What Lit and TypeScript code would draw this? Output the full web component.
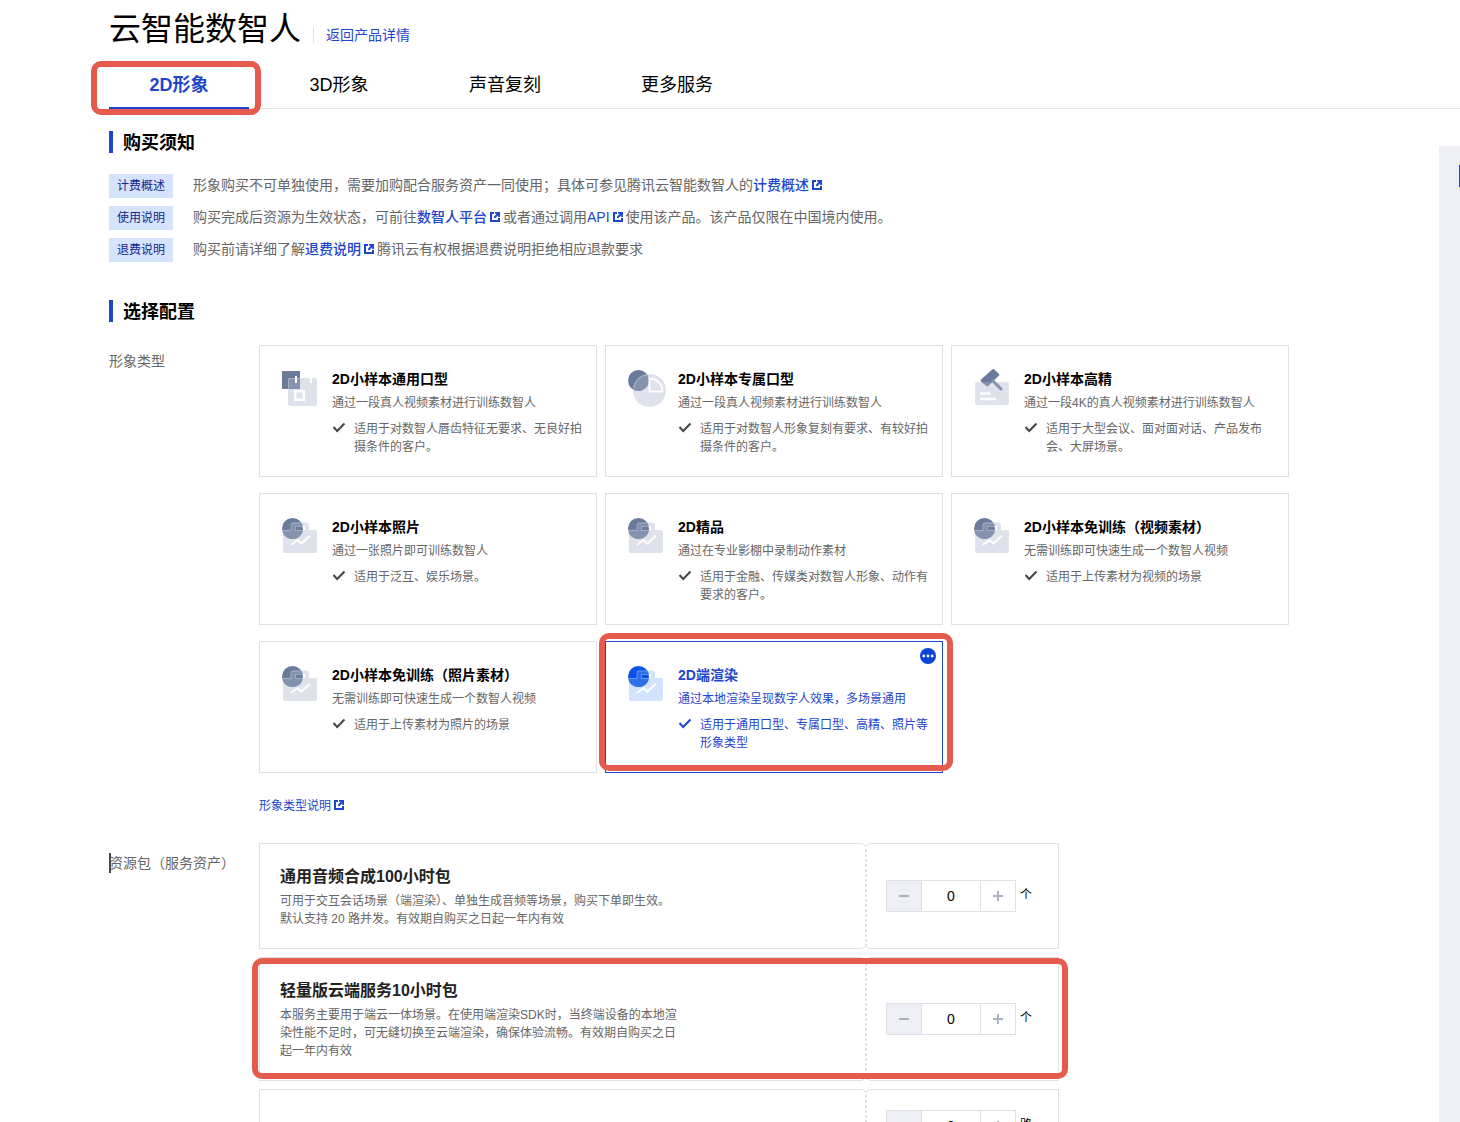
import { LitElement, html, css, svg, nothing } from "lit";
import { customElement, state } from "lit/decorators.js";
import { classMap } from "lit/directives/class-map.js";

type IconName = "blocks" | "pie" | "gavel" | "chart";

interface Tone {
  dark: string;
  light: string;
  blend: string;
  edge: string;
}

interface ImageType {
  id: string;
  icon: IconName;
  title: string;
  desc: string;
  usage: string;
}

interface ResourcePack {
  id: string;
  title: string;
  lines: string[];
  unit: string;
  marked?: boolean;
}

const GREY: Tone = { dark: "#6a7a9a", light: "#dfe2ea", blend: "#8592ad", edge: "#c9cfdb" };
const BLUE: Tone = { dark: "#0b53e8", light: "#d2e3ff", blend: "#2f6fe8", edge: "#a9c8fb" };

const TABS = ["2D形象", "3D形象", "声音复刻", "更多服务"];

const TYPES: ImageType[] = [
  { id: "general", icon: "blocks", title: "2D小样本通用口型", desc: "通过一段真人视频素材进行训练数智人", usage: "适用于对数智人唇齿特征无要求、无良好拍摄条件的客户。" },
  { id: "exclusive", icon: "pie", title: "2D小样本专属口型", desc: "通过一段真人视频素材进行训练数智人", usage: "适用于对数智人形象复刻有要求、有较好拍摄条件的客户。" },
  { id: "hd", icon: "gavel", title: "2D小样本高精", desc: "通过一段4K的真人视频素材进行训练数智人", usage: "适用于大型会议、面对面对话、产品发布会、大屏场景。" },
  { id: "photo", icon: "chart", title: "2D小样本照片", desc: "通过一张照片即可训练数智人", usage: "适用于泛互、娱乐场景。" },
  { id: "premium", icon: "chart", title: "2D精品", desc: "通过在专业影棚中录制动作素材", usage: "适用于金融、传媒类对数智人形象、动作有要求的客户。" },
  { id: "video-free", icon: "chart", title: "2D小样本免训练（视频素材）", desc: "无需训练即可快速生成一个数智人视频", usage: "适用于上传素材为视频的场景" },
  { id: "photo-free", icon: "chart", title: "2D小样本免训练（照片素材）", desc: "无需训练即可快速生成一个数智人视频", usage: "适用于上传素材为照片的场景" },
  { id: "client", icon: "chart", title: "2D端渲染", desc: "通过本地渲染呈现数字人效果，多场景通用", usage: "适用于通用口型、专属口型、高精、照片等形象类型" },
];

const PACKS: ResourcePack[] = [
  {
    id: "audio",
    title: "通用音频合成100小时包",
    lines: ["可用于交互会话场景（端渲染）、单独生成音频等场景，购买下单即生效。", "默认支持 20 路并发。有效期自购买之日起一年内有效"],
    unit: "个",
  },
  {
    id: "cloud",
    title: "轻量版云端服务10小时包",
    lines: ["本服务主要用于端云一体场景。在使用端渲染SDK时，当终端设备的本地渲染性能不足时，可无缝切换至云端渲染，确保体验流畅。有效期自购买之日起一年内有效"],
    unit: "个",
    marked: true,
  },
  { id: "channel", title: "", lines: [], unit: "路" },
];

const external = html`<svg class="ext" viewBox="0 0 10 10" aria-hidden="true">
  <path d="M4 1H1V9H9V6" fill="none" stroke="currentColor" stroke-width="2" />
  <path d="M5 0H10V5H8.200V3.200L5 6.400L3.600 5L6.800 1.800H5Z" fill="currentColor" />
</svg>`;

function drawIcon(name: IconName, t: Tone) {
  switch (name) {
    case "blocks":
      return svg`
        <rect x="2" y="4" width="18" height="18" fill=${t.dark} />
        <rect x="8" y="11" width="29" height="28" rx="2" fill=${t.light} />
        <path d="M8 22V13a2 2 0 0 1 2-2H20V22Z" fill=${t.blend} />
        <path d="M8.500 22V13.500a2 2 0 0 1 2-2H20" fill="none" stroke="#a9b2c6" />
        <path d="M15 9h2v7h-2zM29 10h4l-1 2v4h-2v-4z" fill="#fff" />
        <rect x="15.200" y="24.200" width="8.600" height="8.600" fill="none" stroke="#fff" stroke-width="2.500" />`;
    case "pie":
      return svg`
        <circle cx="12.500" cy="13.500" r="10.500" fill=${t.dark} />
        <circle cx="23.500" cy="23.500" r="16.500" fill=${t.light} />
        <path d="M7.030 22.470A16.500 16.500 0 0 1 20.900 7.200A10.500 10.500 0 0 1 7.030 22.470Z" fill=${t.blend} />
        <path d="M7.500 22.300A16 16 0 0 1 20.900 7.700" fill="none" stroke="#a9b2c6" />
        <path d="M23.500 11.500V24.500H36.500A13 13 0 0 0 23.500 11.500Z" fill="none" stroke="#fff" stroke-width="1.800" />`;
    case "gavel":
      return svg`
        <rect x="3" y="15" width="34" height="23" rx="2" fill=${t.light} />
        <path d="M20.200 2.600a1.500 1.500 0 0 1 2.100 0L27 6.900a1 1 0 0 1 0 1.500L15.400 19.600 8.800 14.300a1 1 0 0 1 0-1.500Z" fill=${t.dark} />
        <path d="M9.700 15H20.200L15.400 19.600Z" fill=${t.blend} />
        <path d="M20.500 13.500L29 22" stroke=${t.blend} stroke-width="3" stroke-linecap="round" />
        <path d="M8 26.500H18M8 32H24" stroke="#fff" stroke-width="2.400" />`;
    case "chart":
      return svg`
        <path d="M12 15V9.500a2 2 0 0 1 2-2H26a3 3 0 0 1 3 3V15H25V11H16V15Z" fill=${t.light} />
        <rect x="3" y="15" width="34" height="23" rx="2" fill=${t.light} />
        <circle cx="12.500" cy="13.500" r="10.500" fill=${t.dark} />
        <path d="M3 15H22.900A10.500 10.500 0 0 1 3 18Z" fill=${t.blend} />
        <path d="M11 15V9.500a2 2 0 0 1 2-2H21.100A10.500 10.500 0 0 1 22.700 11H15.500V15Z" fill=${t.blend} />
        <path d="M2.500 15.500H11V10a2 2 0 0 1 2-2H21M15.500 15.500V11.500H22.500M15.500 15.500H23" fill="none" stroke=${t.edge} stroke-opacity="0.600" stroke-width="0.800" />
        <path d="M10.700 30L17.700 25L21.300 28.600L30 20.700" fill="none" stroke="#fff" stroke-width="2" />`;
  }
}

@customElement("quantity-stepper")
class QuantityStepper extends LitElement {
  static properties = { unit: { type: String }, label: { type: String }, value: { type: Number } };
  declare unit: string;
  declare label: string;
  declare value: number;

  constructor() {
    super();
    this.unit = "";
    this.label = "";
    this.value = 0;
  }

  static styles = css`
    :host {
      display: flex;
      align-items: center;
      gap: 4px;
      font-size: 12px;
      color: #000;
    }
    .box {
      display: flex;
      box-sizing: border-box;
      width: 130px;
      height: 32px;
      border: 1px solid #dfe1e8;
      background: #fff;
    }
    button {
      flex: none;
      display: grid;
      place-items: center;
      width: 34px;
      padding: 0;
      border: 0;
      background: #fff;
      color: #aab2c0;
      cursor: pointer;
    }
    button:disabled {
      background: #eeeff4;
      cursor: default;
    }
    svg {
      width: 10px;
      height: 10px;
    }
    input {
      flex: 1;
      min-width: 0;
      box-sizing: border-box;
      padding: 0;
      border: solid #dfe1e8;
      border-width: 0 1px;
      border-radius: 0;
      background: #fff;
      color: #000;
      font-family: inherit;
      font-size: 14px;
      text-align: center;
      outline: none;
    }
    .unit {
      padding-bottom: 2px;
      line-height: 18px;
    }
  `;

  private change(e: Event) {
    this.value = Math.max(0, Number((e.target as HTMLInputElement).value) || 0);
  }

  render() {
    return html`
      <div class="box">
        <button type="button" aria-label="减少" ?disabled=${this.value <= 0} @click=${() => (this.value -= 1)}>
          <svg viewBox="0 0 10 10"><path d="M0 5H10" stroke="currentColor" stroke-width="2" /></svg>
        </button>
        <input type="text" inputmode="numeric" aria-label=${this.label} .value=${String(this.value)} @change=${this.change} />
        <button type="button" aria-label="增加" @click=${() => (this.value += 1)}>
          <svg viewBox="0 0 10 10"><path d="M0 5H10M5 0V10" stroke="currentColor" stroke-width="2" /></svg>
        </button>
      </div>
      <span class="unit">${this.unit}</span>
    `;
  }
}

@customElement("app-root")
class AppRoot extends LitElement {
  @state() private tab = 0;
  @state() private selected = "client";

  static styles = css`
    :host {
      display: flex;
      flex-direction: column;
      height: 100vh;
      overflow: hidden;
      background: #fff;
      color: #000;
      font-family: "Liberation Sans", "Noto Sans CJK SC", sans-serif;
      font-size: 14px;
      --blue: #1f45cc;
      --line: #dfe1e8;
      --text: #666;
      --mark: #e55b4d;
    }
    a {
      color: var(--blue);
      text-decoration: none;
    }
    h1,
    h2,
    h3,
    p,
    dl,
    dd {
      margin: 0;
    }
    button {
      font-family: inherit;
      cursor: pointer;
    }
    .marked {
      position: relative;
    }
    .marked::after {
      content: "";
      position: absolute;
      z-index: 2;
      box-sizing: border-box;
      border: 6px solid var(--mark);
      border-radius: 10px;
      pointer-events: none;
    }

    .head {
      flex: none;
      display: flex;
      align-items: center;
      gap: 12px;
      height: 61px;
      padding-left: 109px;
    }
    .head h1 {
      font-size: 32px;
      font-weight: 400;
      line-height: 56px;
      padding-bottom: 4px;
    }
    .head a {
      margin-top: 8px;
      padding-left: 12px;
      border-left: 1px solid var(--line);
      line-height: 16px;
    }

    .tabs {
      flex: none;
      display: flex;
      gap: 20px;
      margin-left: 109px;
      border-bottom: 1px solid #e5e7ec;
    }
    .tab {
      box-sizing: border-box;
      min-width: 140px;
      height: 48px;
      margin-bottom: -1px;
      padding: 2px 40px 0;
      border: 0;
      border-bottom: 2px solid transparent;
      background: none;
      color: #000;
      font-size: 18px;
      line-height: 44px;
    }
    .tab.on {
      border-color: var(--blue);
      color: var(--blue);
      font-weight: 600;
    }
    .tab.marked::after {
      inset: 0 -12px -8px -18px;
    }

    .body {
      flex: 1;
      min-height: 0;
      display: flex;
    }
    main {
      flex: 1;
      min-width: 0;
      overflow-y: auto;
      scrollbar-width: none;
      padding: 22px 0 22px 109px;
    }
    .side {
      flex: none;
      box-sizing: border-box;
      width: 21px;
      margin-top: 37px;
      padding: 19px 0 0 20px;
      background: #eeeff4;
      overflow: hidden;
    }
    .side span {
      display: block;
      height: 22px;
      background: var(--blue);
    }

    section + section {
      margin-top: 39px;
    }
    h2 {
      box-sizing: border-box;
      height: 22px;
      padding-left: 10px;
      border-left: 4px solid var(--blue);
      font-size: 18px;
      font-weight: 600;
      line-height: 24px;
    }
    .notices {
      display: grid;
      gap: 8px;
      margin-top: 21px;
    }
    .notice {
      display: flex;
      gap: 20px;
      height: 24px;
      color: var(--text);
      line-height: 22px;
    }
    .notice dt {
      flex: none;
      padding: 0 8px;
      background: #d5e3ff;
      color: #14288c;
      font-size: 12px;
      line-height: 24px;
    }
    .notice a {
      font-weight: 500;
    }
    section + section {
      margin-top: 38px;
    }
    .ext {
      width: 10px;
      height: 10px;
      margin: 0 3px;
    }

    .field {
      display: grid;
      grid-template-columns: 150px minmax(0, 1fr);
      margin-top: 23px;
    }
    .field + .field {
      margin-top: 28px;
    }
    .name {
      position: relative;
      padding-top: 6px;
      color: var(--text);
      line-height: 20px;
    }
    .name.focus {
      padding-top: 10px;
    }
    .name.focus::before {
      content: "";
      position: absolute;
      top: 10px;
      left: 0;
      width: 2px;
      height: 20px;
      background: #4a4a4a;
    }

    .types {
      display: grid;
      grid-template-columns: repeat(3, minmax(0, 338px));
      grid-auto-rows: 1fr;
      gap: 16px 8px;
    }
    .card {
      display: flex;
      align-items: flex-start;
      gap: 12px;
      padding: 21px 14px 20px 20px;
      border: 1px solid var(--line);
      background: #fff;
      color: var(--text);
      font-size: 12px;
      text-align: left;
    }
    .card > svg {
      flex: none;
      width: 40px;
      height: 40px;
    }
    .words {
      display: grid;
      line-height: 24px;
    }
    .words strong {
      color: #000;
      font-size: 14px;
      font-weight: 600;
    }
    .usage {
      display: flex;
      gap: 8px;
      margin-top: 5px;
      line-height: 18px;
    }
    .usage svg {
      flex: none;
      width: 14px;
      height: 14px;
      color: #444;
    }
    .card.on {
      border-color: var(--blue);
      color: var(--blue);
    }
    .card.on strong,
    .card.on .usage svg {
      color: var(--blue);
    }
    .card.marked::after {
      inset: -9px -11px 1px -7px;
    }
    .card .badge {
      position: absolute;
      top: 6px;
      right: 6px;
      width: 16px;
      height: 16px;
    }
    .more {
      display: block;
      margin-top: 24px;
      font-size: 12px;
      line-height: 18px;
    }

    .packs {
      display: grid;
      gap: 8px;
      max-width: 800px;
    }
    .pack {
      position: relative;
      display: grid;
      grid-template-columns: minmax(0, 1fr) 2px 191px;
      border: 1px solid var(--line);
    }
    .pack.marked::after {
      inset: 0 -10px 1px -8px;
    }
    .info {
      padding: 20px;
      color: var(--text);
      font-size: 12px;
      line-height: 18px;
    }
    .info h3 {
      margin-bottom: 2px;
      color: #222;
      font-size: 16px;
      font-weight: 600;
      line-height: 26px;
    }
    .info p {
      max-width: 400px;
    }
    .seam {
      position: relative;
      background: repeating-linear-gradient(#dfe1e8 0 3px, #fff 3px 5px);
    }
    .seam svg {
      position: absolute;
      top: -1px;
      left: -4px;
      width: 10px;
      height: 4px;
    }
    .seam svg + svg {
      top: auto;
      bottom: -1px;
    }
    .count {
      display: flex;
      align-items: center;
      padding: 20px 19px;
    }
  `;

  private renderCard(t: ImageType) {
    const on = t.id === this.selected;
    return html`
      <button type="button" class=${classMap({ card: true, on, marked: on })} aria-pressed=${on} @click=${() => (this.selected = t.id)}>
        <svg viewBox="0 0 40 40" aria-hidden="true">${drawIcon(t.icon, on ? BLUE : GREY)}</svg>
        <span class="words">
          <strong>${t.title}</strong>
          <span>${t.desc}</span>
          <span class="usage">
            <svg viewBox="0 0 14 14" aria-hidden="true"><path d="M1.500 7L5.200 11L12.500 3.500" fill="none" stroke="currentColor" stroke-width="2" /></svg>
            <span>${t.usage}</span>
          </span>
        </span>
        ${on
          ? html`<svg class="badge" viewBox="0 0 16 16" aria-hidden="true">
              <circle cx="8" cy="8" r="8" fill="#0a45d8" />
              <g fill="#fff"><circle cx="3.800" cy="8" r="1.400" /><circle cx="8" cy="8" r="1.400" /><circle cx="12.200" cy="8" r="1.400" /></g>
            </svg>`
          : nothing}
      </button>
    `;
  }

  private renderPack(p: ResourcePack) {
    return html`
      <article class=${classMap({ pack: true, marked: !!p.marked })}>
        <div class="info">${p.title ? html`<h3>${p.title}</h3>` : nothing}${p.lines.map((l) => html`<p>${l}</p>`)}</div>
        <div class="seam">
          <svg viewBox="0 0 10 4" aria-hidden="true"><path d="M0 0H10V1L5 4L0 1Z" fill="#fff" /><path d="M0 0.500H1L5 3L9 0.500H10" fill="none" stroke="#dfe1e8" /></svg>
          <svg viewBox="0 0 10 4" aria-hidden="true"><path d="M0 4H10V3L5 0L0 3Z" fill="#fff" /><path d="M0 3.500H1L5 1L9 3.500H10" fill="none" stroke="#dfe1e8" /></svg>
        </div>
        <div class="count"><quantity-stepper unit=${p.unit} label=${p.title || "数量"}></quantity-stepper></div>
      </article>
    `;
  }

  render() {
    return html`
      <header class="head" lang="zh-CN">
        <h1>云智能数智人</h1>
        <a href="#detail">返回产品详情</a>
      </header>
      <nav class="tabs" role="tablist" lang="zh-CN">
        ${TABS.map(
          (t, i) => html`<button
            type="button"
            role="tab"
            class=${classMap({ tab: true, on: i === this.tab, marked: i === this.tab })}
            aria-selected=${i === this.tab}
            @click=${() => (this.tab = i)}
          >${t}</button>`
        )}
      </nav>
      <div class="body" lang="zh-CN">
        <main>
          <section>
            <h2>购买须知</h2>
            <dl class="notices">
              <div class="notice">
                <dt>计费概述</dt>
                <dd>形象购买不可单独使用，需要加购配合服务资产一同使用；具体可参见腾讯云智能数智人的<a href="#billing">计费概述${external}</a></dd>
              </div>
              <div class="notice">
                <dt>使用说明</dt>
                <dd>购买完成后资源为生效状态，可前往<a href="#platform">数智人平台${external}</a>或者通过调用<a href="#api">API${external}</a>使用该产品。该产品仅限在中国境内使用。</dd>
              </div>
              <div class="notice">
                <dt>退费说明</dt>
                <dd>购买前请详细了解<a href="#refund">退费说明${external}</a>腾讯云有权根据退费说明拒绝相应退款要求</dd>
              </div>
            </dl>
          </section>
          <section>
            <h2>选择配置</h2>
            <div class="field">
              <div class="name">形象类型</div>
              <div>
                <div class="types">${TYPES.map((t) => this.renderCard(t))}</div>
                <a class="more" href="#types">形象类型说明${external}</a>
              </div>
            </div>
            <div class="field">
              <div class="name focus">资源包（服务资产）</div>
              <div class="packs">${PACKS.map((p) => this.renderPack(p))}</div>
            </div>
          </section>
        </main>
        <aside class="side"><span></span></aside>
      </div>
    `;
  }
}
